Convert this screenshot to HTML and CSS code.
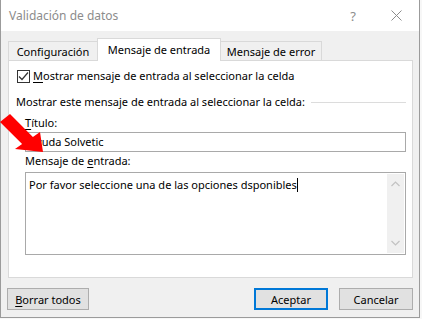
FILE: index.html
```html
<!DOCTYPE html>
<html lang="es">

<head>
    <meta charset="utf-8">
    <meta name="viewport" content="width=device-width, initial-scale=1.0">
    <title>Validación de datos</title>
    <link rel="stylesheet" href="styles.css">
</head>

<body>

    <div class="dialog">
        <div class="titlebar">
            <span class="title">Validación de datos</span>
            <span class="help">?</span>
            <svg class="close" width="11" height="11" viewBox="0 0 11 11">
                <path d="M0.5 0.5 L10.5 10.5 M10.5 0.5 L0.5 10.5" stroke="#8c8c8c" stroke-width="1" fill="none" />
            </svg>
        </div>

        <div class="body">
            <div class="tabs">
                <div class="tab tab-conf">Configuración</div>
                <div class="tab tab-entrada active">Mensaje de entrada</div>
                <div class="tab tab-error">Mensaje de error</div>
            </div>

            <div class="panel">
                <div class="check-row">
                    <span class="checkbox">
                        <svg width="11" height="11" viewBox="0 0 11 11">
                            <path d="M1 5.5 L4 8.5 L10 1.5" stroke="#333" stroke-width="1.2" fill="none" />
                        </svg>
                    </span>
                    <span><u>M</u>ostrar mensaje de entrada al seleccionar la celda</span>
                </div>

                <div class="section">
                    <span>Mostrar este mensaje de entrada al seleccionar la celda:</span>
                    <span class="section-line"></span>
                </div>

                <div class="field">
                    <div class="label"><u>T</u>ítulo:</div>
                    <div class="input">Ayuda Solvetic</div>

                    <div class="label label-msg">Mensaje de <u>e</u>ntrada:</div>
                    <div class="textarea">
                        <div class="textarea-text">Por favor seleccione una de las opciones dsponibles<span class="caret"></span></div>
                        <div class="scrollbar">
                            <svg width="9" height="6" viewBox="0 0 9 6">
                                <path d="M0.5 5 L4.5 1 L8.5 5" stroke="#c2c2c2" stroke-width="1.2" fill="none" />
                            </svg>
                            <svg width="9" height="6" viewBox="0 0 9 6">
                                <path d="M0.5 1 L4.5 5 L8.5 1" stroke="#c2c2c2" stroke-width="1.2" fill="none" />
                            </svg>
                        </div>
                    </div>
                </div>
            </div>

            <div class="buttons">
                <button class="btn btn-borrar"><u>B</u>orrar todos</button>
                <span class="spacer"></span>
                <button class="btn btn-ok">Aceptar</button>
                <button class="btn">Cancelar</button>
            </div>
        </div>
    </div>

    <!-- flecha roja -->
    <svg class="arrow" width="50" height="50" viewBox="0 0 50 50">
        <polygon points="10,6 32.9,28.9 40,24 43,44 15,41 22.1,36.1 0,14" fill="#ff0000" />
    </svg>

</body>

</html>
```

FILE: styles.css
```css
body {
    margin: 0;
    background-color: #f7f7f7;
    font-family: "Segoe UI", "Noto Sans", sans-serif;
    font-size: 11px;
    color: #000000;
}

u {
    text-decoration-thickness: 1px;
    text-underline-offset: 2px;
}

.dialog {
    width: 420px;
    height: 318px;
    box-sizing: border-box;
    border: 1px solid #9b9b9b;
    border-top: none;
    background-color: #f0f0f0;
}

.titlebar {
    height: 31px;
    background-color: #ffffff;
    display: flex;
    align-items: center;
    padding-left: 8px;
    font-size: 12px;
}

.title {
    color: #8c8c8c;
    flex: 1;
}

.help {
    color: #8c8c8c;
    font-size: 13px;
    margin-right: 35px;
}

.close {
    margin-right: 17px;
}

.body {
    padding: 7px 6px 0 7px;
}

.tabs {
    display: flex;
    align-items: flex-end;
    height: 22px;
}

.tab {
    height: 19px;
    box-sizing: border-box;
    border: 1px solid #d9d9d9;
    border-bottom: none;
    background-color: #f0f0f0;
    display: flex;
    align-items: center;
    justify-content: center;
}

.tab-conf {
    width: 90px;
}

.tab-entrada {
    width: 124px;
}

.tab-error {
    width: 102px;
    margin-left: -1px;
}

.tab.active {
    height: 23px;
    margin-bottom: -1px;
    margin-left: -1px;
    background-color: #ffffff;
    position: relative;
    z-index: 1;
    padding-bottom: 2px;
}

.panel {
    height: 218px;
    box-sizing: border-box;
    border: 1px solid #d9d9d9;
    background-color: #ffffff;
    padding: 7px 6px 0 7px;
}

.check-row {
    display: flex;
    align-items: center;
    height: 16px;
    line-height: 16px;
}

.checkbox {
    width: 13px;
    height: 13px;
    box-sizing: border-box;
    border: 1px solid #333333;
    display: flex;
    align-items: center;
    justify-content: center;
    margin-left: 1px;
    margin-right: 3px;
}

.section {
    display: flex;
    align-items: center;
    margin-top: 10px;
    line-height: 16px;
}

.section-line {
    flex: 1;
    height: 1px;
    background-color: #dcdcdc;
    margin-left: 6px;
}

.field {
    margin-left: 9px;
}

.label {
    line-height: 16px;
    margin-top: 5px;
}

.label-msg {
    margin-top: 1px;
}

.input {
    height: 20px;
    box-sizing: border-box;
    border: 1px solid #a9a9a9;
    margin-top: 1px;
    padding-left: 3px;
    line-height: 18px;
}

.textarea {
    height: 83px;
    box-sizing: border-box;
    border: 1px solid #a9a9a9;
    margin-top: 3px;
    display: flex;
    padding: 1px 1px 1px 0;
}

.textarea-text {
    flex: 1;
    padding: 3px 3px;
    line-height: 16px;
}

.caret {
    display: inline-block;
    width: 1px;
    height: 14px;
    background-color: #000000;
    vertical-align: -3px;
}

.scrollbar {
    width: 17px;
    background-color: #f0f0f0;
    display: flex;
    flex-direction: column;
    align-items: center;
    justify-content: space-between;
    padding: 7px 0 7px 0;
    box-sizing: border-box;
}

.buttons {
    display: flex;
    margin-top: 10px;
    margin-left: -1px;
    gap: 11px;
}

.spacer {
    flex: 1;
}

.btn {
    height: 22px;
    width: 74px;
    box-sizing: border-box;
    border: 1px solid #adadad;
    background-color: #e1e1e1;
    font-family: "Segoe UI", "Noto Sans", sans-serif;
    font-size: 11px;
    color: #000000;
    padding: 0;
}

.btn-borrar {
    width: 82px;
}

.btn-ok {
    border: 2px solid #0078d7;
}

.arrow {
    position: absolute;
    left: 0;
    top: 108px;
}
```
